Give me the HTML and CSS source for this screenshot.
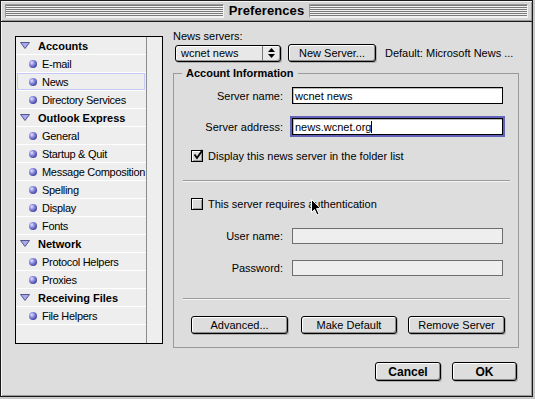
FILE: index.html
```html
<!DOCTYPE html>
<html lang="en">
<head>
  <meta charset="UTF-8">
  <title>Preferences</title>
  <link rel="stylesheet" href="styles.css">
</head>
<body>

<div class="window">
  <div class="titlebar">
    <span class="stripes"></span>
    <h1>Preferences</h1>
    <span class="stripes"></span>
  </div>

  <div class="content">
    <div class="sidebar">
      <ul class="tree">
        <li class="group"><svg class="tri" width="10" height="7" viewBox="0 0 10 7"><path d="M0.5 0.5 H9.5 L5 6.5 Z" fill="#a8a8f0" stroke="#55558a"/></svg>Accounts</li>
        <li class="item"><span class="dot"></span>E-mail</li>
        <li class="item selected"><span class="dot"></span>News</li>
        <li class="item"><span class="dot"></span>Directory Services</li>
        <li class="group"><svg class="tri" width="10" height="7" viewBox="0 0 10 7"><path d="M0.5 0.5 H9.5 L5 6.5 Z" fill="#a8a8f0" stroke="#55558a"/></svg>Outlook Express</li>
        <li class="item"><span class="dot"></span>General</li>
        <li class="item"><span class="dot"></span>Startup &amp; Quit</li>
        <li class="item"><span class="dot"></span>Message Composition</li>
        <li class="item"><span class="dot"></span>Spelling</li>
        <li class="item"><span class="dot"></span>Display</li>
        <li class="item"><span class="dot"></span>Fonts</li>
        <li class="group"><svg class="tri" width="10" height="7" viewBox="0 0 10 7"><path d="M0.5 0.5 H9.5 L5 6.5 Z" fill="#a8a8f0" stroke="#55558a"/></svg>Network</li>
        <li class="item"><span class="dot"></span>Protocol Helpers</li>
        <li class="item"><span class="dot"></span>Proxies</li>
        <li class="group"><svg class="tri" width="10" height="7" viewBox="0 0 10 7"><path d="M0.5 0.5 H9.5 L5 6.5 Z" fill="#a8a8f0" stroke="#55558a"/></svg>Receiving Files</li>
        <li class="item"><span class="dot"></span>File Helpers</li>
      </ul>
      <div class="scrollcol"></div>
    </div>

    <div class="main">
      <div class="caption">News servers:</div>
      <div class="server-row">
        <div class="popup">
          <span class="popup-text">wcnet news</span>
          <span class="popup-arrows">
            <svg width="7" height="10" viewBox="0 0 7 10"><path d="M3.5 0 L7 4 H0 Z M0 6 H7 L3.5 10 Z" fill="#000"/></svg>
          </span>
        </div>
        <button class="btn new-server">New Server...</button>
        <span class="default-text">Default: Microsoft News ...</span>
      </div>

      <fieldset class="groupbox">
        <legend>Account Information</legend>

        <div class="field first">
          <label>Server name:</label>
          <div class="textbox">wcnet news</div>
        </div>
        <div class="field second">
          <label>Server address:</label>
          <div class="textbox focused">news.wcnet.org<span class="caret"></span></div>
        </div>

        <div class="check first-check">
          <span class="box"><svg width="12" height="12" viewBox="0 0 12 12"><path d="M2.5 5.5 L5 9 L10.5 1" fill="none" stroke="#000" stroke-width="1.8"/></svg></span>
          Display this news server in the folder list
        </div>

        <div class="sep"></div>

        <div class="check second-check">
          <span class="box"></span>
          This server requires authentication
        </div>

        <div class="field user">
          <label>User name:</label>
          <div class="textbox disabled"></div>
        </div>
        <div class="field pass">
          <label>Password:</label>
          <div class="textbox disabled"></div>
        </div>

        <div class="sep lower"></div>

        <div class="actions">
          <button class="btn w97">Advanced...</button>
          <button class="btn w96 mid">Make Default</button>
          <button class="btn w97 last">Remove Server</button>
        </div>
      </fieldset>

      <div class="dialog-buttons">
        <button class="btn strong cancel">Cancel</button>
        <button class="btn strong ok">OK</button>
      </div>
    </div>
  </div>

  <svg class="cursor" width="11" height="17" viewBox="0 0 11 17"><path d="M0.5 0.5 V13.5 L3.5 10.5 L6 16 L8 15 L5.6 9.6 H9.8 Z" fill="#000" stroke="#fff"/></svg>
</div>

</body>
</html>
```

FILE: styles.css
```css
body {
  margin: 0;
  background: #c8c8c8;
  font-family: "Liberation Sans", Arial, sans-serif;
  font-size: 11px;
  color: #000;
}

.window {
  position: relative;
  width: 531px;
  height: 395px;
  background: #dddddd;
  border: 1px solid #1a1a1a;
  box-shadow: inset 1px 1px 0 #f4f4f4, inset -1px -1px 0 #9a9a9a;
}

.titlebar {
  display: flex;
  align-items: center;
  height: 20px;
  padding: 0 4px;
  background: #d6d6d6;
  border-bottom: 1px solid #1a1a1a;
  box-shadow: inset 1px 1px 0 #f4f4f4, inset -1px -1px 0 #9a9a9a;
}

.titlebar h1 {
  margin: 0;
  padding: 0 5px;
  font-size: 13px;
  font-weight: bold;
  line-height: 16px;
  letter-spacing: 0.1px;
}

.stripes {
  flex: 1;
  height: 12px;
  background: repeating-linear-gradient(#7a7a7a 0 1px, #f2f2f2 1px 2px);
  border: 1px solid #9a9a9a;
  border-right-color: #f2f2f2;
  border-bottom-color: #f2f2f2;
}

.content {
  display: flex;
  align-items: flex-start;
  padding: 8px 0 0 14px;
}

/* left tree */

.sidebar {
  display: flex;
  width: 146px;
  height: 306px;
  margin-top: 6px;
  border: 1px solid #000;
  background: #eeeeee;
}

.tree {
  width: 130px;
  margin: 0;
  padding: 0;
  list-style: none;
}

.tree li {
  display: flex;
  align-items: center;
  height: 17px;
  border-bottom: 1px solid #ffffff;
  white-space: nowrap;
}

.tree .group {
  padding-left: 4px;
  font-weight: bold;
}

.tree .tri {
  flex-shrink: 0;
  margin-right: 8px;
}

.tree .item {
  padding-left: 13px;
  letter-spacing: -0.3px;
}

.tree .selected {
  margin: 0 1px;
  padding-left: 12px;
  box-shadow: inset 0 0 0 1px #c8c8f8;
}

.dot {
  flex-shrink: 0;
  width: 8px;
  height: 8px;
  margin-right: 5px;
  border-radius: 50%;
  background: radial-gradient(circle at 35% 35%, #e4e4ff 0, #8a8ae0 35%, #3a3a90 80%, #22225a 100%);
}

.scrollcol {
  flex: 1;
  border-left: 1px solid #8c8c8c;
}

/* right side */

.main {
  width: 346px;
  margin-left: 10px;
}

.caption {
  line-height: 12px;
}

.server-row {
  display: flex;
  align-items: center;
  margin-top: 2px;
  height: 18px;
}

.popup {
  display: flex;
  width: 104px;
  height: 15px;
  margin-left: 2px;
  border: 1px solid #000;
  border-radius: 3px;
  background: #e8e8e8;
  box-shadow: inset 1px 1px 0 #fff, inset -1px -1px 0 #999, 1px 1px 0 #aaa;
}

.popup-text {
  flex: 1;
  padding-left: 5px;
  line-height: 15px;
}

.popup-arrows {
  display: flex;
  align-items: center;
  justify-content: center;
  width: 17px;
  border-left: 1px solid #777;
}

.btn {
  height: 18px;
  padding: 0;
  font-family: inherit;
  font-size: 11px;
  color: #000;
  background: #dddddd;
  border: 1px solid #000;
  border-radius: 3px;
  box-shadow: inset 1px 1px 0 #fff, inset -1px -1px 0 #8c8c8c, 1px 1px 0 #b0b0b0;
}

.new-server {
  width: 88px;
  margin-left: 7px;
}

.default-text {
  margin-left: 9px;
  white-space: nowrap;
}

.groupbox {
  margin: 5px 0 0;
  padding: 0 0 13px;
  min-width: 0;
  border: 1px solid #9a9a9a;
}

.groupbox legend {
  margin-left: 8px;
  padding: 0 4px;
  font-weight: bold;
  line-height: 12px;
}

.field {
  display: flex;
  align-items: center;
}

.field label {
  width: 109px;
  margin-right: 9px;
  text-align: right;
}

.field.first { margin-top: 8px; }
.field.second { margin-top: 14px; }
.field.user { margin-top: 18px; }
.field.pass { margin-top: 16px; }

.textbox {
  display: flex;
  align-items: center;
  width: 207px;
  height: 15px;
  padding-left: 2px;
  border: 1px solid #000;
  background: #fff;
  box-shadow: inset 1px 1px 0 #bbb;
}

.textbox.focused {
  outline: 2px solid #6262b8;
}

.textbox.disabled {
  height: 14px;
  border-color: #6e6e6e;
  background: #eeeeee;
  box-shadow: none;
}

.caret {
  width: 1px;
  height: 12px;
  background: #000;
}

.check {
  display: flex;
  align-items: center;
  height: 12px;
  padding-left: 17px;
}

.check.first-check { margin-top: 15px; }
.check.second-check { margin-top: 16px; }

.box {
  width: 10px;
  height: 10px;
  margin-right: 5px;
  border: 1px solid #000;
  background: #d8d8d8;
  box-shadow: inset 1px 1px 0 #fff, inset -1px -1px 0 #999;
  position: relative;
}

.box svg {
  position: absolute;
  left: 0;
  top: -2px;
}

.sep {
  height: 0;
  margin: 18px 8px 0 9px;
  border-top: 1px solid #9a9a9a;
  border-bottom: 1px solid #f4f4f4;
}

.sep.lower {
  margin-top: 22px;
}

.actions {
  display: flex;
  margin-top: 16px;
  padding-left: 17px;
}

.w97 { width: 97px; }
.w96 { width: 96px; }
.actions .mid { margin-left: 13px; }
.actions .last { margin-left: 11px; }

.dialog-buttons {
  display: flex;
  justify-content: flex-end;
  margin-top: 14px;
  padding-right: 2px;
}

.btn.strong {
  height: 19px;
  font-size: 12px;
  font-weight: bold;
}

.cancel { width: 66px; }
.ok { width: 65px; margin-left: 11px; }

.cursor {
  position: absolute;
  left: 310px;
  top: 198px;
}
```
